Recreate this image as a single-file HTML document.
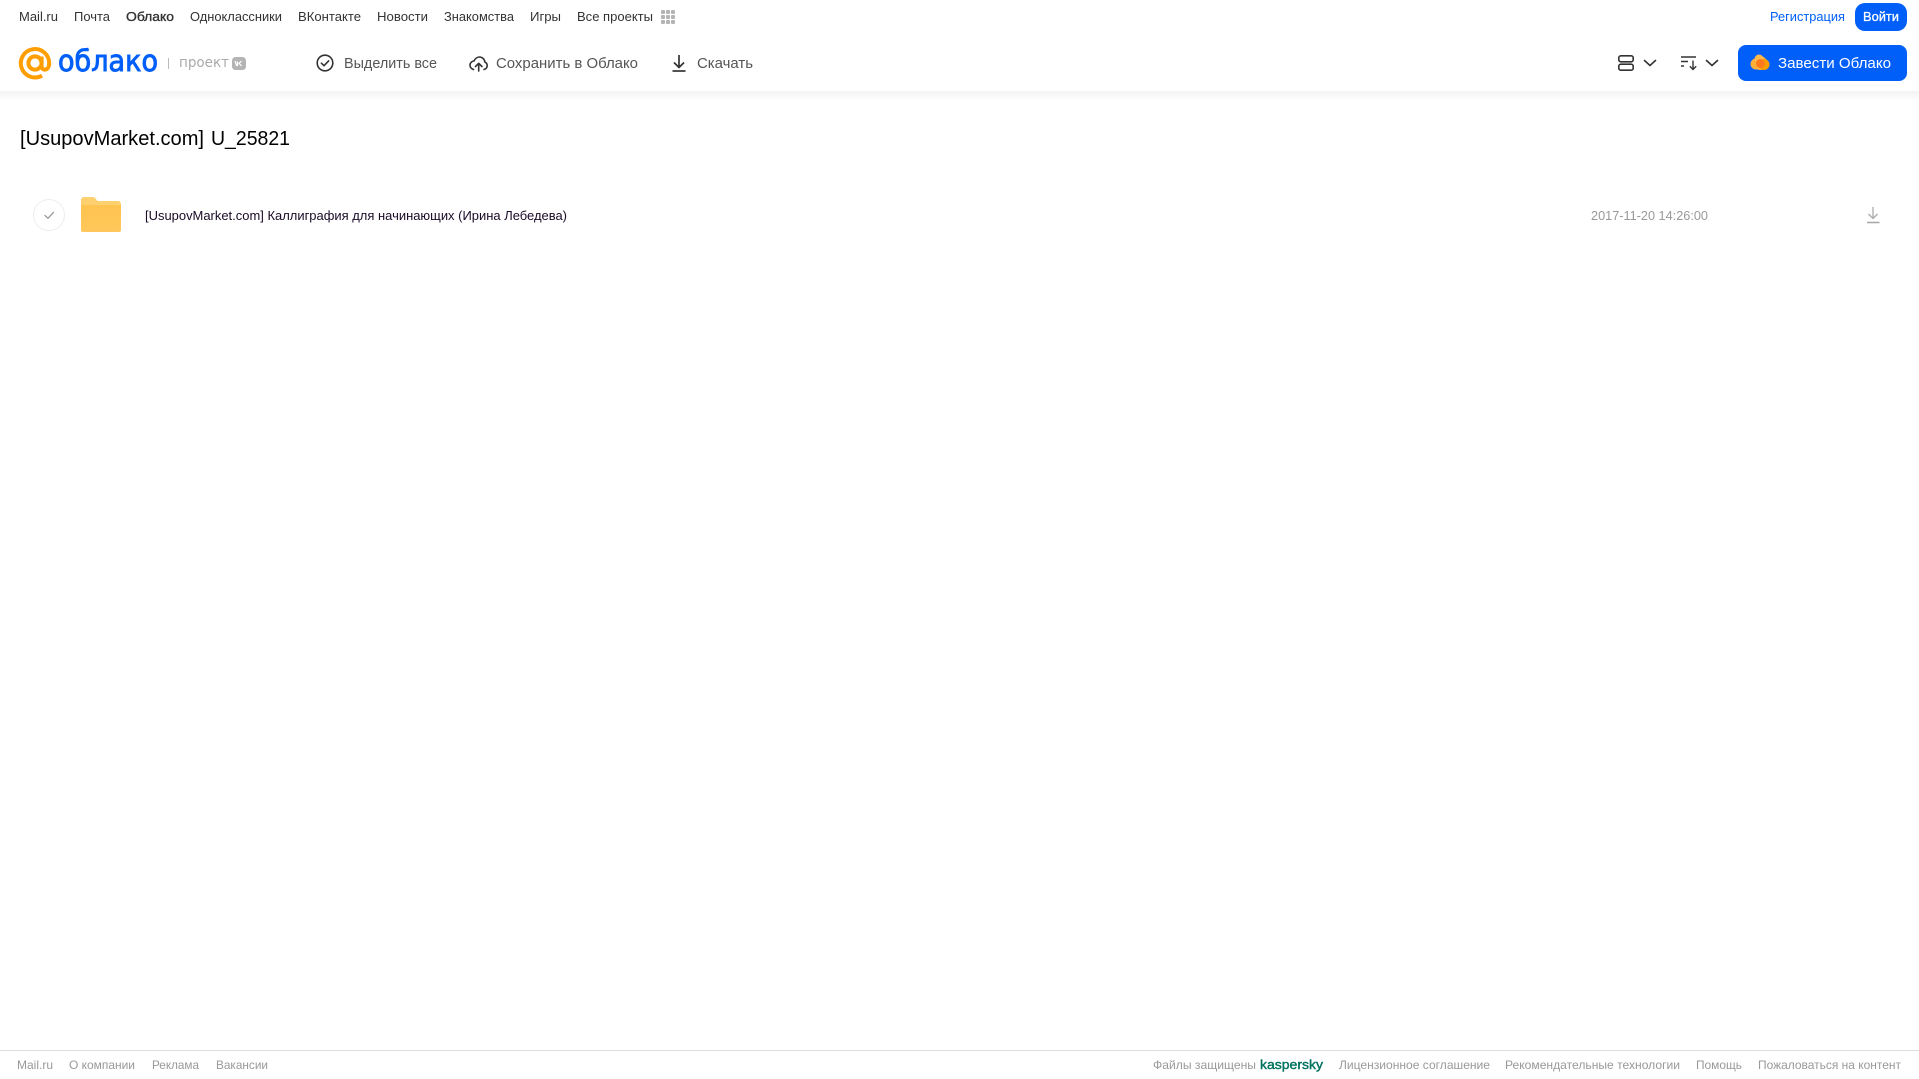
<!DOCTYPE html>
<html lang="ru">
<head>
<meta charset="utf-8">
<title>[UsupovMarket.com] U_25821</title>
<style>
html,body{margin:0;padding:0;background:#fff;width:1919px;height:1079px;overflow:hidden}
svg{display:block}
text{font-family:"Liberation Sans",sans-serif}
.n{font-size:13px;fill:#333}
.t{font-size:15px;fill:#555}
.f{font-size:12px;fill:#999}
</style>
</head>
<body>
<svg width="1919" height="1079" viewBox="0 0 1919 1079" xmlns="http://www.w3.org/2000/svg">
<defs>
<linearGradient id="sh" x1="0" y1="0" x2="0" y2="1"><stop offset="0" stop-color="#f3f3f3"/><stop offset="1" stop-color="#fff"/></linearGradient>
<linearGradient id="fo" x1="0" y1="0" x2="0" y2="1"><stop offset="0" stop-color="#ffc34f"/><stop offset="1" stop-color="#ffc75c"/></linearGradient>
</defs>
<rect x="0" y="91" width="1919" height="10" fill="url(#sh)"/>

<!-- top nav -->
<text class="n" x="19" y="21" textLength="39" lengthAdjust="spacingAndGlyphs">Mail.ru</text>
<text class="n" x="74" y="21" textLength="36" lengthAdjust="spacingAndGlyphs">Почта</text>
<text class="n" x="126" y="21" textLength="48" lengthAdjust="spacingAndGlyphs" stroke="#333" stroke-width=".35">Облако</text>
<text class="n" x="190" y="21" textLength="92" lengthAdjust="spacingAndGlyphs">Одноклассники</text>
<text class="n" x="298" y="21" textLength="63" lengthAdjust="spacingAndGlyphs">ВКонтакте</text>
<text class="n" x="377" y="21" textLength="51" lengthAdjust="spacingAndGlyphs">Новости</text>
<text class="n" x="444" y="21" textLength="70" lengthAdjust="spacingAndGlyphs">Знакомства</text>
<text class="n" x="530" y="21" textLength="31" lengthAdjust="spacingAndGlyphs">Игры</text>
<text class="n" x="577" y="21" textLength="76" lengthAdjust="spacingAndGlyphs">Все проекты</text>
<g fill="#b4b4b4">
<rect x="661" y="10" width="4" height="4" rx="1"/><rect x="666" y="10" width="4" height="4" rx="1"/><rect x="671" y="10" width="4" height="4" rx="1"/>
<rect x="661" y="15" width="4" height="4" rx="1"/><rect x="666" y="15" width="4" height="4" rx="1"/><rect x="671" y="15" width="4" height="4" rx="1"/>
<rect x="661" y="20" width="4" height="4" rx="1"/><rect x="666" y="20" width="4" height="4" rx="1"/><rect x="671" y="20" width="4" height="4" rx="1"/>
</g>
<text x="1770" y="21" font-size="13" fill="#005ff9" textLength="75" lengthAdjust="spacingAndGlyphs">Регистрация</text>
<rect x="1855" y="3" width="52" height="28" rx="10" fill="#005ff9"/>
<text x="1863" y="21" font-size="13" fill="#fff" stroke="#fff" stroke-width=".3" textLength="36" lengthAdjust="spacingAndGlyphs">Войти</text>

<!-- logo -->
<g fill="none" stroke="#ff9e00" stroke-width="4" stroke-linecap="butt">
<circle cx="35" cy="63" r="6.6"/>
<path d="M42 75.600A14.200 14.200 0 1 1 49.200 63C49.200 67.500 47 69.600 44.600 69.600C42.800 69.600 41.600 68.200 41.600 66V56.500"/>
</g>
<text x="58" y="71" style="font-family:'DejaVu Sans',sans-serif" font-size="29" fill="#005ff9" stroke="#005ff9" stroke-width=".9" textLength="100" lengthAdjust="spacingAndGlyphs">облако</text>
<rect x="168" y="58" width="1" height="11" fill="#bbb"/>
<text x="179" y="67" style="font-family:'DejaVu Sans',sans-serif" font-size="14" fill="#aaa" textLength="50" lengthAdjust="spacingAndGlyphs">проект</text>
<rect x="232" y="57" width="14" height="13" rx="3.500" fill="#b4b4b4"/>
<path d="M235 61l1.800 5M237.500 61.500v4.500M241.500 61l-2.500 2.400 2.700 2.600" fill="none" stroke="#fff" stroke-width="1.200"/>

<!-- toolbar -->
<g fill="none" stroke="#333" stroke-width="1.600">
<circle cx="325" cy="63" r="7.800"/>
<path d="M321.400 63.200l2.600 2.500 4.600-4.800" stroke-linecap="round" stroke-linejoin="round"/>
</g>
<text class="t" x="344" y="68" textLength="93" lengthAdjust="spacingAndGlyphs">Выделить все</text>
<g fill="none" stroke="#333" stroke-width="1.600" stroke-linecap="round" stroke-linejoin="round">
<path d="M473.500 69.500C471 68.500 470 66.800 470 65.200C470 62.800 472 61 474 61C475 58.600 477.200 57 479.500 57C482.500 57 484.700 59.400 484.800 62C486.300 62.700 487.200 64 487.200 65.500C487.200 67.500 486 69 484 69.500"/>
<path d="M478.700 71V63.500M475.500 66.500l3.200-3.200 3.200 3.200"/>
</g>
<text class="t" x="496" y="68" textLength="142" lengthAdjust="spacingAndGlyphs">Сохранить в Облако</text>
<g fill="none" stroke="#333" stroke-width="1.700" stroke-linejoin="round">
<path d="M679 55V67M674 62.500l5 5 5-5"/>
<path d="M672.500 71H685.500"/>
</g>
<text class="t" x="697" y="68" textLength="56" lengthAdjust="spacingAndGlyphs">Скачать</text>

<!-- right tools -->
<g fill="none" stroke="#333" stroke-width="1.600">
<rect x="1618.800" y="55.800" width="14.400" height="6" rx="2"/>
<rect x="1618.800" y="64.200" width="14.400" height="6" rx="2"/>
<path d="M1644.500 60.500l5.500 5 5.500-5" stroke-linecap="round" stroke-linejoin="round"/>
<path d="M1681 57H1696M1681 61.500H1688M1681 66H1684" stroke-width="1.400"/>
<path d="M1693 60.500V69.500M1689.800 66.300l3.200 3.200 3.200-3.200" stroke-width="1.400"/>
<path d="M1706.500 60.500l5.500 5 5.500-5" stroke-linecap="round" stroke-linejoin="round"/>
</g>
<rect x="1738" y="45" width="169" height="36" rx="8" fill="#005ff9"/>
<circle cx="1760" cy="63" r="7" fill="#ffb03a"/>
<circle cx="1756" cy="64" r="5.500" fill="#ffb03a"/>
<circle cx="1764" cy="64.500" r="5.500" fill="#ff9e00"/>
<circle cx="1759" cy="59" r="4.500" fill="#ffb84d"/>
<circle cx="1760.500" cy="63.500" r="4.500" fill="#ff7a1a"/>
<text x="1778" y="68" font-size="15" fill="#fff" textLength="113" lengthAdjust="spacingAndGlyphs">Завести Облако</text>

<!-- title -->
<text x="20" y="145" font-size="20" fill="#000" textLength="184" lengthAdjust="spacingAndGlyphs">[UsupovMarket.com]</text>
<text x="211" y="145" font-size="20" fill="#000" textLength="79" lengthAdjust="spacingAndGlyphs">U_25821</text>

<!-- row -->
<circle cx="49" cy="215" r="15.500" fill="#fff" stroke="#eee" stroke-width="1"/>
<path d="M45 215.500l3 2.800 5.500-6" fill="none" stroke="#999" stroke-width="1.300" stroke-linecap="round" stroke-linejoin="round"/>
<path d="M81 200a3 3 0 0 1 3-3h8.500c1.500 0 2.500.7 3.300 1.700l1.700 2.300h20.500a3 3 0 0 1 3 3v5H81z" fill="#ffd06f"/>
<path d="M81 205h40v25a2 2 0 0 1-2 2H83a2 2 0 0 1-2-2z" fill="url(#fo)"/>
<text x="145" y="220" font-size="13" fill="#1a0a26" textLength="422" lengthAdjust="spacingAndGlyphs">[UsupovMarket.com] Каллиграфия для начинающих (Ирина Лебедева)</text>
<text x="1591" y="220" font-size="13" fill="#999" textLength="117" lengthAdjust="spacingAndGlyphs">2017-11-20 14:26:00</text>
<g fill="none" stroke="#aaa" stroke-width="1.300">
<path d="M1873 207V218.500M1868.500 214l4.500 4.500 4.500-4.500"/>
<path d="M1867 222.500H1879.500" stroke-width="1.600"/>
</g>

<!-- footer -->
<rect x="0" y="1050" width="1919" height="1" fill="#ddd"/>
<text class="f" x="17" y="1069" textLength="36" lengthAdjust="spacingAndGlyphs">Mail.ru</text>
<text class="f" x="69" y="1069" textLength="66" lengthAdjust="spacingAndGlyphs">О компании</text>
<text class="f" x="152" y="1069" textLength="47" lengthAdjust="spacingAndGlyphs">Реклама</text>
<text class="f" x="216" y="1069" textLength="52" lengthAdjust="spacingAndGlyphs">Вакансии</text>
<text class="f" x="1153" y="1069" textLength="103" lengthAdjust="spacingAndGlyphs">Файлы защищены</text>
<text x="1260" y="1069" font-size="13" fill="#00715f" stroke="#00715f" stroke-width=".4" textLength="63" lengthAdjust="spacingAndGlyphs">kaspersky</text>
<text class="f" x="1339" y="1069" textLength="151" lengthAdjust="spacingAndGlyphs">Лицензионное соглашение</text>
<text class="f" x="1505" y="1069" textLength="175" lengthAdjust="spacingAndGlyphs">Рекомендательные технологии</text>
<text class="f" x="1696" y="1069" textLength="46" lengthAdjust="spacingAndGlyphs">Помощь</text>
<text class="f" x="1758" y="1069" textLength="143" lengthAdjust="spacingAndGlyphs">Пожаловаться на контент</text>
</svg>
</body>
</html>
